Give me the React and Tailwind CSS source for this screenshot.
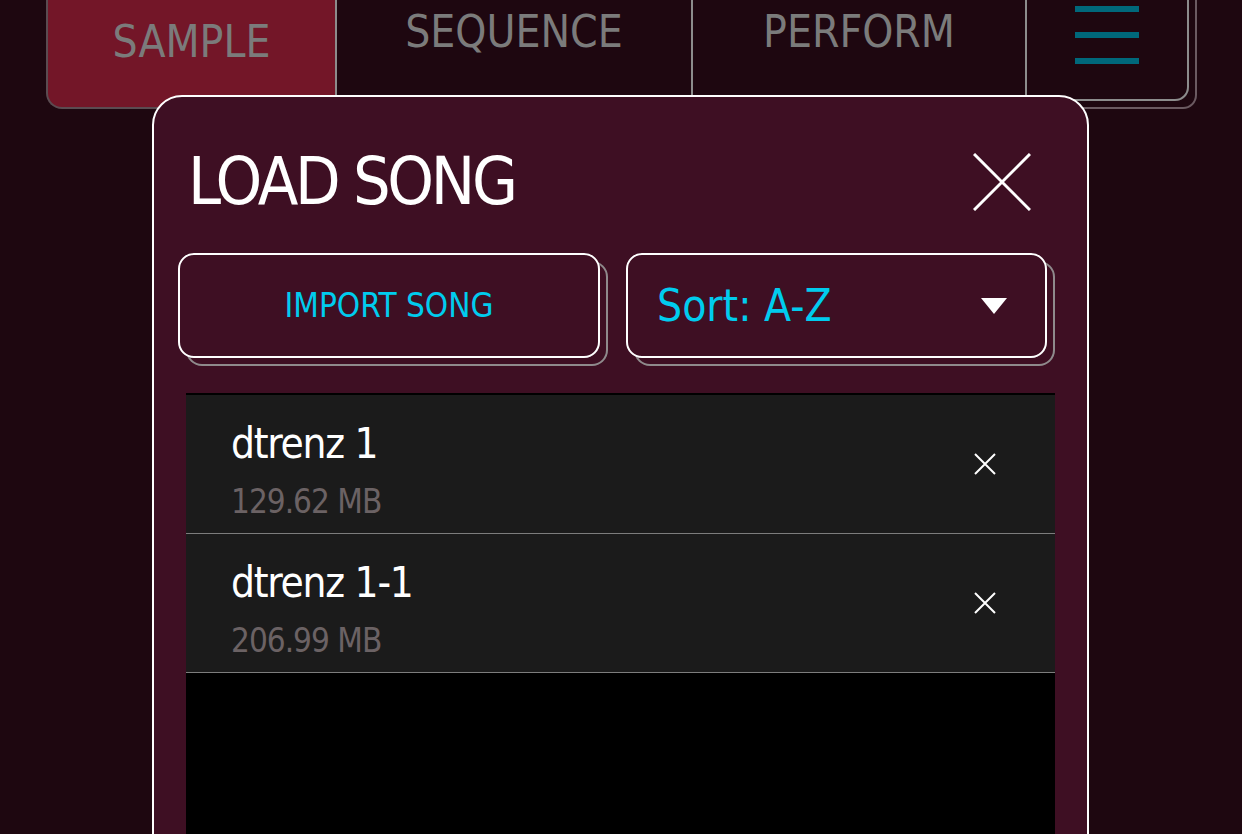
import React from "react";

const font = "font-['Liberation_Sans_Narrow','DejaVu_Sans_Condensed','Liberation_Sans',sans-serif]";

const songs = [
  { name: "dtrenz 1", size: "129.62 MB" },
  { name: "dtrenz 1-1", size: "206.99 MB" },
];

const CloseIcon = ({ size, stroke }) => (
  <svg width={size} height={size} viewBox={`0 0 ${size} ${size}`} fill="none">
    <path
      d={`M1 1L${size - 1} ${size - 1}M${size - 1} 1L1 ${size - 1}`}
      stroke="#ffffff"
      strokeWidth={stroke}
    />
  </svg>
);

const App = () => {
  return (
    <div className={`relative h-[834px] w-full overflow-hidden bg-[#1e0710] ${font}`}>
      {/* Top tabs */}
      <div className="-mt-[37px] ml-[46px] flex h-[138px] w-[1143px] rounded-b-[14px] border-2 border-[#8c8c8c] shadow-[8px_8px_0_-2px_#1e0710,8px_8px_0_0_#6b5a61]">
        <div className="-ml-[2px] flex h-[144px] w-[291px] items-center justify-center self-start rounded-bl-[16px] border-b-2 border-l-2 border-r-2 border-[#5b4b51] border-r-[#8c8c8c] bg-[#731628] pt-[12px] text-[44px] text-[#7b7b7b]">
          SAMPLE
        </div>
        <div className="flex w-[356px] items-center justify-center border-r-2 border-[#8c8c8c] text-[44px] text-[#7b7b7b]">
          SEQUENCE
        </div>
        <div className="flex w-[334px] items-center justify-center border-r-2 border-[#8c8c8c] text-[44px] text-[#7b7b7b]">
          PERFORM
        </div>
        <div className="flex flex-1 flex-col items-center justify-center gap-[20px] pt-[5px]">
          <div className="h-[6px] w-[64px] bg-[#00687b]" />
          <div className="h-[6px] w-[64px] bg-[#00687b]" />
          <div className="h-[6px] w-[64px] bg-[#00687b]" />
        </div>
      </div>

      {/* Load song dialog */}
      <div className="absolute left-[152px] top-[95px] h-[800px] w-[937px] rounded-[30px] border-2 border-white bg-[#3e0f23] px-[32px] pt-[40px]">
        <div className="flex h-[90px] items-center justify-between">
          <h1 className="ml-[2px] text-[66px] leading-none tracking-[-0.05em] text-white">
            LOAD SONG
          </h1>
          <button className="mr-[24px]">
            <CloseIcon size={58} stroke={3} />
          </button>
        </div>

        <div className="-ml-[8px] mt-[26px] flex gap-[26px]">
          <button className="flex h-[105px] w-[422px] items-center justify-center rounded-[16px] border-2 border-white text-[33px] text-[#00ccee] shadow-[8px_8px_0_-2px_#3e0f23,8px_8px_0_0_#8f8a8c]">
            IMPORT SONG
          </button>
          <button className="flex h-[105px] w-[421px] items-center justify-between rounded-[16px] border-2 border-white pl-[29px] pr-[38px] text-[44px] text-[#00ccee] shadow-[8px_8px_0_-2px_#3e0f23,8px_8px_0_0_#8f8a8c]">
            <span>Sort: A-Z</span>
            <svg width="26" height="16" viewBox="0 0 26 16">
              <path d="M0 0H26L13 16Z" fill="#ffffff" />
            </svg>
          </button>
        </div>

        <div className="mt-[35px] h-[600px] bg-black pt-[2px]">
          {songs.map((song) => (
            <div
              key={song.name}
              className="flex h-[139px] items-center justify-between border-b border-[#7d7d7d] bg-[#1b1b1b] pl-[45px] pr-[59px]"
            >
              <div className="self-start pt-[28px]">
                <div className="text-[42px] leading-none tracking-[-0.03em] text-white">
                  {song.name}
                </div>
                <div className="mt-[20px] text-[33px] leading-none tracking-[-0.03em] text-[#6b6264]">
                  {song.size}
                </div>
              </div>
              <CloseIcon size={22} stroke={2} />
            </div>
          ))}
        </div>
      </div>
    </div>
  );
};

export default App;
